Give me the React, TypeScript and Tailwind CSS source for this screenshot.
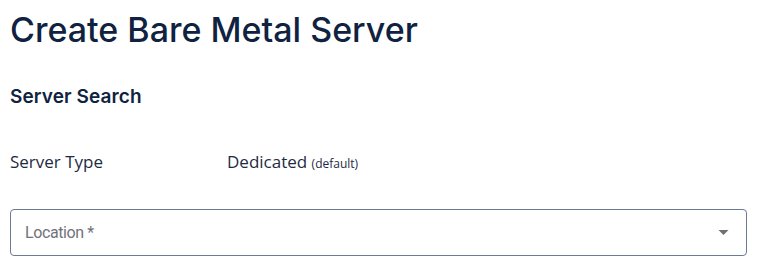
export default function App() {
  return (
    <div className="min-h-screen bg-white px-[10px] pt-[10px]">
      <h1 className="font-['Inter',sans-serif] text-[34px] font-medium leading-[40px] text-[#0f2341]">
        Create Bare Metal Server
      </h1>
      <h2 className="mt-[35px] font-['Inter',sans-serif] text-[19px] font-semibold leading-[24px] tracking-[0.1px] text-[#0f2341]">
        Server Search
      </h2>
      <div className="mt-[42px] flex items-baseline font-['Open_Sans',sans-serif] text-[17px] leading-[22px] text-[#1e2b44]">
        <span className="w-[217px]">Server Type</span>
        <span>
          Dedicated <span className="text-[12px]">(default)</span>
        </span>
      </div>
      <div className="mt-[34px] flex h-[47px] w-[737px] items-center justify-between rounded-[4px] border border-[#6b7b91] pl-[14px] pr-[14px]">
        <span className="font-['Roboto',sans-serif] text-[16px] tracking-[-0.4px] text-[#6f737a]">Location *</span>
        <svg width="11" height="5" viewBox="0 0 10 5" className="mr-[3px]">
          <path d="M0 0 L10 0 L5 5 Z" fill="#707070" />
        </svg>
      </div>
    </div>
  );
}
